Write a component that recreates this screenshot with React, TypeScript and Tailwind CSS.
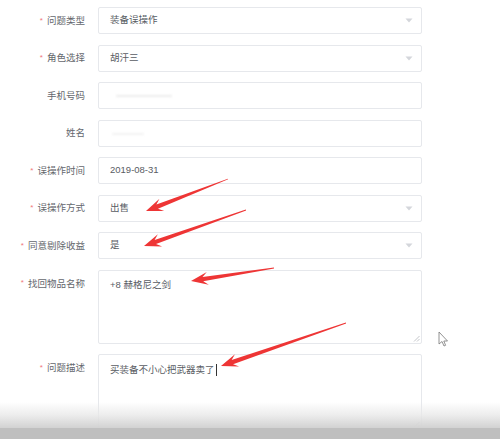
import React from 'react'

const font = { fontFamily: '"Liberation Sans", "Noto Sans CJK SC", sans-serif' }

type Arrow = { tx: number; ty: number; px: number; py: number }

// annotation arrows drawn over the form (tail -> tip)
const arrows: Arrow[] = [
  { tx: 228, ty: 179, px: 146, py: 211 },
  { tx: 246, ty: 210, px: 144, py: 246 },
  { tx: 274, ty: 268, px: 191, py: 281 },
  { tx: 346, ty: 323, px: 221, py: 366 },
]

function arrowPoints(a: Arrow) {
  const dx = a.px - a.tx
  const dy = a.py - a.ty
  const len = Math.hypot(dx, dy)
  const ux = dx / len
  const uy = dy / len
  const nx = -uy
  const ny = ux
  const head = 15
  const bx = a.px - ux * head
  const by = a.py - uy * head
  const pts = [
    [a.tx + nx * 0.4, a.ty + ny * 0.4],
    [bx + ux * 3 + nx * 2.2, by + uy * 3 + ny * 2.2],
    [bx - ux * 2 + nx * 6.5, by - uy * 2 + ny * 6.5],
    [a.px, a.py],
    [bx - ux * 2 - nx * 6.5, by - uy * 2 - ny * 6.5],
    [bx + ux * 3 - nx * 2.2, by + uy * 3 - ny * 2.2],
    [a.tx - nx * 0.4, a.ty - ny * 0.4],
  ]
  return pts.map((p) => p.join(',')).join(' ')
}

function Label({ text, required }: { text: string; required?: boolean }) {
  return (
    <div className="w-[85px] shrink-0 flex justify-end items-center text-[9.5px] text-[#64676d] leading-none">
      {required && <span className="text-[#f0787a] mr-[4px] text-[8px]">*</span>}
      {text}
    </div>
  )
}

function Caret() {
  return (
    <svg width="8" height="5" viewBox="0 0 8 5" className="mr-[8px]">
      <path d="M0.5 0.5 L7.5 0.5 L4 4.5 Z" fill="#d4d6db" />
    </svg>
  )
}

function Row({
  label,
  required,
  value,
  select,
  children,
}: {
  label: string
  required?: boolean
  value?: string
  select?: boolean
  children?: React.ReactNode
}) {
  return (
    <div className="flex items-center h-[27px]">
      <Label text={label} required={required} />
      <div className="ml-[13px] w-[324px] h-full border border-[#e6e8ec] rounded-[2px] flex items-center justify-between bg-white">
        <div className="pl-[11px] text-[9.5px] text-[#585c63] flex items-center">
          {value}
          {children}
        </div>
        {select && <Caret />}
      </div>
    </div>
  )
}

function Resize() {
  return (
    <svg width="7" height="7" viewBox="0 0 7 7" className="absolute right-[1px] bottom-[1px]">
      <path d="M6.5 1 L1 6.5 M6.5 4 L4 6.5" stroke="#b5b8bd" strokeWidth="0.8" />
    </svg>
  )
}

function TextArea({
  label,
  value,
  height,
  cursor,
}: {
  label: string
  value: string
  height: string
  cursor?: boolean
}) {
  return (
    <div className="flex items-start">
      <div className="pt-[9px]">
        <Label text={label} required />
      </div>
      <div className={`ml-[13px] w-[324px] ${height} border border-[#e6e8ec] rounded-[2px] relative bg-white`}>
        <div className="pl-[11px] pt-[9px] text-[9.5px] text-[#585c63] leading-none flex items-center">
          {value}
          {cursor && <span className="inline-block w-px h-[12px] bg-[#333] ml-[1px]" />}
        </div>
        <Resize />
      </div>
    </div>
  )
}

export default function App() {
  return (
    <div className="relative w-[500px] h-[439px] bg-white overflow-hidden" style={font}>
      <div className="flex flex-col gap-[10.5px] pt-[7px]">
        <Row label="问题类型" required value="装备误操作" select />
        <Row label="角色选择" required value="胡汗三" select />
        <Row label="手机号码">
          <span className="block w-[56px] h-[2px] mt-[1px] ml-[6px] bg-[#ededed] rounded-full blur-[1px]" />
        </Row>
        <Row label="姓名">
          <span className="block w-[32px] h-[2px] mt-[2px] ml-[2px] bg-[#f2f2f2] rounded-full blur-[1px]" />
        </Row>
        <Row label="误操作时间" required value="2019-08-31" />
        <Row label="误操作方式" required value="出售" select />
        <Row label="同意剔除收益" required value="是" select />
        <TextArea label="找回物品名称" value="+8 赫格尼之剑" height="h-[74px]" />
        <TextArea label="问题描述" value="买装备不小心把武器卖了" height="h-[76px]" cursor />
      </div>

      <svg className="absolute inset-0 pointer-events-none" width="500" height="439">
        {arrows.map((a, i) => (
          <polygon key={i} points={arrowPoints(a)} fill="#ee3535" />
        ))}
        <path
          d="M439 332 L439 344 L442 341.5 L444 346 L445.6 345.3 L443.8 341 L447.5 341 Z"
          fill="#fff"
          stroke="#777"
          strokeWidth="0.8"
          strokeLinejoin="round"
        />
      </svg>

      <div className="absolute left-0 right-0 bottom-0 flex flex-col pointer-events-none">
        <div className="h-[26px] bg-gradient-to-b from-white/0 via-[#e8e8e8]/80 to-[#d2d2d2]" />
        <div className="h-[11px] bg-[#bfbfbf]" />
      </div>
    </div>
  )
}
